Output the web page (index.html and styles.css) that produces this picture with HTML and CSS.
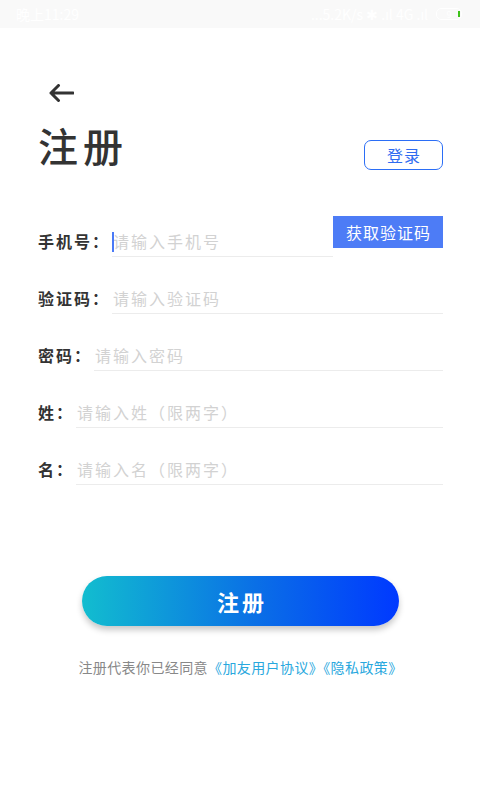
FILE: index.html
```html
<!DOCTYPE html>
<html lang="zh-CN">
<head>
    <meta charset="UTF-8">
    <meta name="viewport" content="width=device-width, initial-scale=1.0">
    <title>注册</title>
    <link rel="stylesheet" href="styles.css">
</head>
<body>
    <div class="status-bar">
        <span class="status-time">晚上11:29</span>
        <span class="status-right">
            <span class="status-net">...5.2K/s ✱ .ıl 4G .ıl</span>
            <span class="battery"><span class="battery-num">9</span><span class="battery-level"></span></span>
        </span>
    </div>

    <div class="page">
        <svg class="back" width="26" height="18" viewBox="0 0 26 18">
            <path d="M25 9 H3 M10.5 1.5 L3 9 L10.5 16.5" fill="none" stroke="#333" stroke-width="3" stroke-linecap="round" stroke-linejoin="round"/>
        </svg>

        <div class="title-row">
            <h1 class="title">注册</h1>
            <button class="login-btn">登录</button>
        </div>

        <div class="form">
            <div class="row">
                <label class="label">手机号：</label>
                <div class="field field-short">
                    <span class="caret"></span>
                    <input type="text" placeholder="请输入手机号">
                </div>
                <button class="code-btn">获取验证码</button>
            </div>
            <div class="row">
                <label class="label">验证码：</label>
                <div class="field"><input type="text" placeholder="请输入验证码"></div>
            </div>
            <div class="row">
                <label class="label">密码：</label>
                <div class="field"><input type="password" placeholder="请输入密码"></div>
            </div>
            <div class="row">
                <label class="label">姓：</label>
                <div class="field"><input type="text" placeholder="请输入姓（限两字）"></div>
            </div>
            <div class="row">
                <label class="label">名：</label>
                <div class="field"><input type="text" placeholder="请输入名（限两字）"></div>
            </div>
        </div>

        <button class="submit-btn">注册</button>

        <p class="agree">注册代表你已经同意<a href="#">《加友用户协议》</a><a href="#">《隐私政策》</a></p>
    </div>
</body>
</html>
```

FILE: styles.css
```css
body {
    margin: 0;
    padding: 0;
    width: 480px;
    height: 800px;
    background: #fff;
    font-family: "Noto Sans CJK SC", "Noto Sans", sans-serif;
    color: #333;
}

.status-bar {
    height: 28px;
    background: #f9f9f9;
    display: flex;
    justify-content: space-between;
    align-items: center;
    padding: 0 18px 0 16px;
    color: #fff;
    font-size: 14px;
}

.status-right {
    display: flex;
    align-items: center;
    gap: 8px;
}

.battery {
    display: flex;
    align-items: center;
    justify-content: center;
    width: 24px;
    height: 10px;
    border: 1px solid #fff;
    border-radius: 5px;
    font-size: 9px;
    position: relative;
}

.battery-level {
    position: absolute;
    right: 1px;
    top: 2px;
    width: 2px;
    height: 6px;
    background: #3ec21a;
}

.page {
    padding: 0 37px 0 38px;
}

.back {
    display: block;
    margin: 56px 0 0 10px;
}

.title-row {
    display: flex;
    justify-content: space-between;
    align-items: flex-start;
    margin-top: 20px;
}

.title {
    margin: 0;
    font-size: 40px;
    line-height: 46px;
    font-weight: 500;
    letter-spacing: 5px;
    color: #333;
}

.login-btn {
    margin-top: 18px;
    width: 79px;
    height: 30px;
    border: 1.5px solid #2b6ef6;
    border-radius: 7px;
    background: #fff;
    color: #2f6cf0;
    font-family: inherit;
    font-size: 16px;
    letter-spacing: 1px;
    padding: 0 0 0 1px;
}

.form {
    margin-top: 46px;
    display: flex;
    flex-direction: column;
    gap: 26px;
}

.row {
    display: flex;
    align-items: flex-end;
}

.label {
    font-size: 16px;
    line-height: 30px;
    padding-bottom: 1px;
    font-weight: 700;
    letter-spacing: 2px;
    color: #333;
    margin-right: 2px;
    white-space: nowrap;
}

.field {
    flex: 1;
    height: 30px;
    border-bottom: 1px solid #ececec;
    position: relative;
}

.field input {
    width: 100%;
    height: 30px;
    border: none;
    outline: none;
    padding: 0 0 0 1px;
    font-family: inherit;
    font-size: 16px;
    letter-spacing: 2px;
    color: #333;
    background: transparent;
}

.field input::placeholder {
    color: #d2d2d2;
}

.caret {
    position: absolute;
    left: 0;
    top: 6px;
    width: 2px;
    height: 20px;
    background: #4a7af7;
}

.code-btn {
    width: 110px;
    height: 32px;
    margin-bottom: 9px;
    border: none;
    background: #4d7cf6;
    color: #fff;
    font-family: inherit;
    font-size: 16px;
    letter-spacing: 1px;
    padding: 0 0 0 1px;
    flex-shrink: 0;
}

.submit-btn {
    display: block;
    width: 317px;
    height: 50px;
    margin: 91px auto 0;
    border: none;
    border-radius: 25px;
    background: linear-gradient(90deg, #12bdcf, #0a6fe6 55%, #0039ff);
    box-shadow: 0 4px 6px rgba(0, 0, 0, 0.22);
    color: #fff;
    font-family: inherit;
    font-size: 22px;
    font-weight: 700;
    letter-spacing: 3px;
    padding: 0 0 0 3px;
}

.agree {
    margin: 31px 0 0;
    text-align: center;
    font-size: 14px;
    line-height: 20px;
    letter-spacing: 0.4px;
    color: #888;
}

.agree a {
    color: #29a8de;
    text-decoration: none;
}
```
